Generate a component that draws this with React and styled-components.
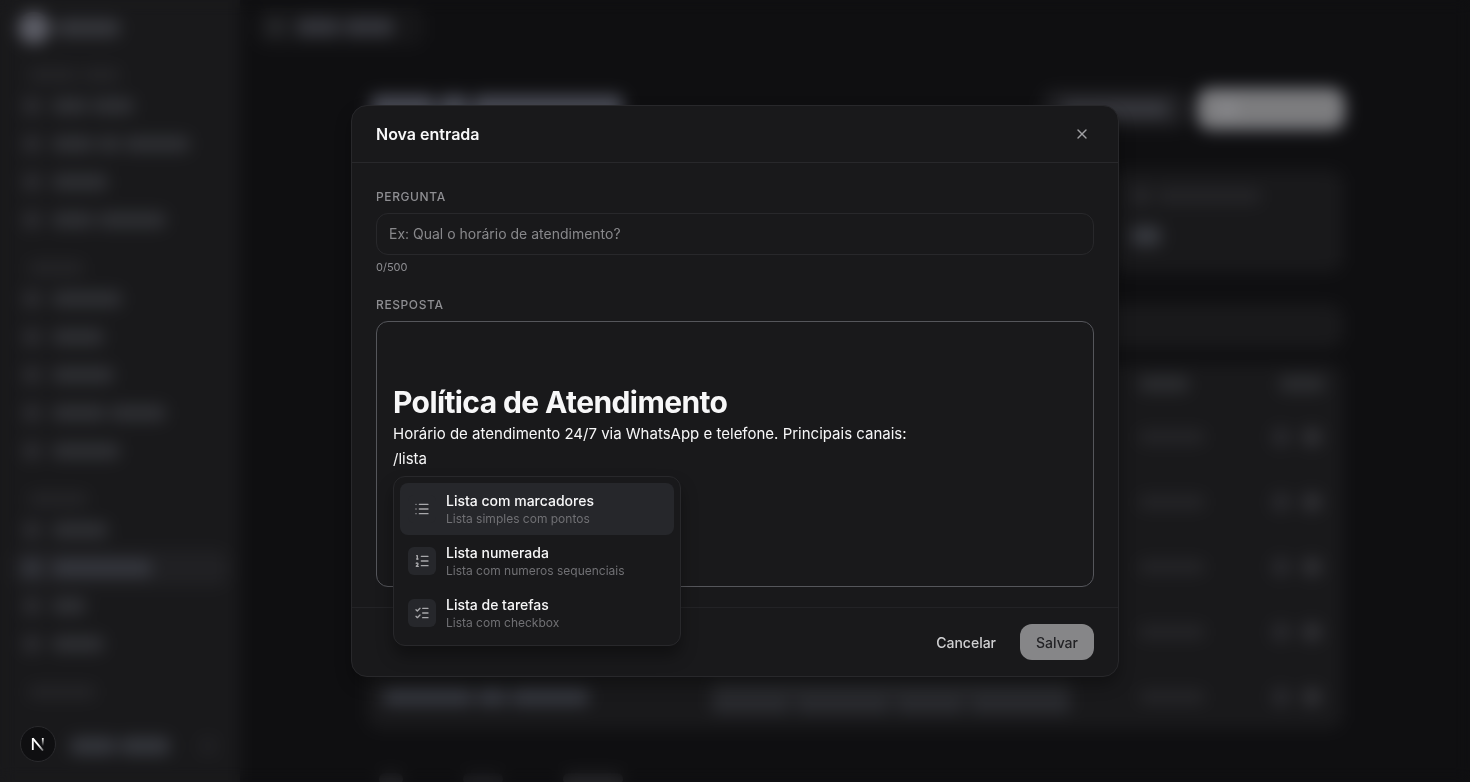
import { useState } from 'react'
import styled, { createGlobalStyle } from 'styled-components'
import { List, ListChecks, ListOrdered, X } from 'lucide-react'

const navGroups = [
  { heading: [50, 38], items: [[36, 42], [42, 22, 66], [56], [42, 68]] },
  { heading: [56], items: [[70], [52], [62], [54, 56], [68]] },
  { heading: [60], items: [[56], [100], [34], [52]], active: 1 },
  { heading: [68], items: [] },
]

const tableRows = [66, 66, 66, 66, 66]

const commands = [
  { title: 'Lista com marcadores', text: 'Lista simples com pontos', icon: List },
  { title: 'Lista numerada', text: 'Lista com numeros sequenciais', icon: ListOrdered },
  { title: 'Lista de tarefas', text: 'Lista com checkbox', icon: ListChecks },
]

function Words({ widths, tone, size }) {
  return (
    <WordRow>
      {widths.map((width, i) => (
        <Word key={i} $tone={tone} $size={size} style={{ width }} />
      ))}
    </WordRow>
  )
}

function Sidebar() {
  return (
    <Aside>
      <Brand>
        <BrandMark />
        <Words widths={[64]} tone="#35363b" size={18} />
      </Brand>
      <Nav>
        {navGroups.map((group, i) => (
          <div key={i}>
            <NavHeading><Words widths={group.heading} tone="#242427" size={14} /></NavHeading>
            <NavList>
              {group.items.map((item, j) => (
                <NavItem key={j} href="#" $active={group.active === j}>
                  <Dot $tone={group.active === j ? '#34363d' : '#2b2b2f'} />
                  <Words widths={item} tone={group.active === j ? '#36383f' : '#2f3034'} size={16} />
                </NavItem>
              ))}
            </NavList>
          </div>
        ))}
      </Nav>
      <Account>
        <Words widths={[46, 50]} tone="#34363c" size={18} />
        <Dot $tone="#202023" />
      </Account>
    </Aside>
  )
}

function KnowledgePage() {
  return (
    <Main>
      <TopBar>
        <Crumb>
          <Dot $tone="#27282b" />
          <Words widths={[44, 50]} tone="#34353b" size={18} />
        </Crumb>
      </TopBar>
      <Content>
        <PageHead>
          <Words widths={[64, 30, 150]} tone="#494b55" size={28} />
          <Actions>
            <Action><Words widths={[108]} tone="#393a40" size={16} /></Action>
            <Action $primary><Words widths={[20]} tone="#86868a" size={18} /></Action>
          </Actions>
        </PageHead>
        <Cards>
          {[1, 2, 3, 4].map(n => (
            <Card key={n}>
              <CardLabel>
                <Dot $tone="#262629" />
                <Words widths={[104]} tone="#242427" size={16} />
              </CardLabel>
              <Words widths={[30]} tone="#37393f" size={20} />
            </Card>
          ))}
        </Cards>
        <SearchBar />
        <Table>
          <thead>
            <tr>
              <Th $width={328}><Words widths={[70]} tone="#2c2d30" size={16} /></Th>
              <Th><Words widths={[60]} tone="#2c2d30" size={16} /></Th>
              <Th $width={140}><Words widths={[50]} tone="#2c2d30" size={16} /></Th>
              <Th $width={80}><Words widths={[46]} tone="#2c2d30" size={16} /></Th>
            </tr>
          </thead>
          <tbody>
            {tableRows.map((width, i) => (
              <tr key={i}>
                <Td><Words widths={[90, 30, 78]} tone="#34363d" size={18} /></Td>
                <Td>
                  <Words widths={[360]} tone="#27282b" size={14} />
                  <Words widths={[80, 96, 70, 102]} tone="#2c2d32" size={14} />
                </Td>
                <Td><Words widths={[width]} tone="#252528" size={14} /></Td>
                <Td>
                  <RowActions>
                    <Dot $tone="#29292d" />
                    <Dot $tone="#313135" />
                  </RowActions>
                </Td>
              </tr>
            ))}
          </tbody>
        </Table>
        <Pager>
          <Words widths={[24]} tone="#222225" size={12} />
          <Words widths={[40]} tone="#1d1d20" size={12} />
          <Words widths={[60]} tone="#242427" size={12} />
        </Pager>
      </Content>
    </Main>
  )
}

function CommandMenu() {
  const [selected, setSelected] = useState(0)

  return (
    <Menu role="listbox" aria-label="Comandos">
      {commands.map(({ title, text, icon: Icon }, i) => (
        <Command
          key={title}
          type="button"
          role="option"
          aria-selected={selected === i}
          $selected={selected === i}
          onMouseEnter={() => setSelected(i)}
        >
          <CommandIcon><Icon size={16} strokeWidth={2} /></CommandIcon>
          <span>
            <CommandTitle>{title}</CommandTitle>
            <CommandText>{text}</CommandText>
          </span>
        </Command>
      ))}
    </Menu>
  )
}

function EntryDialog() {
  const [question, setQuestion] = useState('')

  return (
    <Dialog role="dialog" aria-modal="true" aria-labelledby="dialog-title">
      <DialogHead>
        <DialogTitle id="dialog-title">Nova entrada</DialogTitle>
        <Close type="button" aria-label="Fechar"><X size={16} strokeWidth={2} /></Close>
      </DialogHead>
      <DialogBody>
        <div>
          <Label htmlFor="question">Pergunta</Label>
          <Input
            id="question"
            maxLength={500}
            placeholder="Ex: Qual o horário de atendimento?"
            value={question}
            onChange={e => setQuestion(e.target.value)}
          />
          <Counter>{question.length}/500</Counter>
        </div>
        <div>
          <Label as="div" id="answer-label">Resposta</Label>
          <EditorFrame>
            <Editor
              role="textbox"
              aria-multiline="true"
              aria-labelledby="answer-label"
              contentEditable
              suppressContentEditableWarning
              spellCheck={false}
            >
              <h1>Política de Atendimento</h1>
              <p>Horário de atendimento 24/7 via WhatsApp e telefone. Principais canais:</p>
              <p>/lista</p>
            </Editor>
            <MenuAnchor><CommandMenu /></MenuAnchor>
          </EditorFrame>
        </div>
      </DialogBody>
      <DialogFoot>
        <Button type="button">Cancelar</Button>
        <Button type="button" $primary>Salvar</Button>
      </DialogFoot>
    </Dialog>
  )
}

function DevBadge() {
  return (
    <Badge type="button" aria-label="Next.js">
      <svg width="14" height="14" viewBox="0 0 14 14" fill="none" strokeWidth="1.8">
        <defs>
          <linearGradient id="leg" x1="0" y1="1" x2="0" y2="9" gradientUnits="userSpaceOnUse">
            <stop stopColor="#fff" />
            <stop offset="1" stopColor="#fff" stopOpacity="0" />
          </linearGradient>
          <linearGradient id="slash" x1="8" y1="8" x2="13" y2="14" gradientUnits="userSpaceOnUse">
            <stop stopColor="#fff" />
            <stop offset="1" stopColor="#fff" stopOpacity="0.3" />
          </linearGradient>
        </defs>
        <line x1="1.8" y1="1" x2="1.8" y2="13" stroke="#fff" />
        <line x1="1.8" y1="1.4" x2="12" y2="13.6" stroke="url(#slash)" />
        <line x1="11.8" y1="1" x2="11.8" y2="9" stroke="url(#leg)" />
      </svg>
    </Badge>
  )
}

export default function App() {
  return (
    <>
      <GlobalStyle />
      <Shell inert>
        <Sidebar />
        <KnowledgePage />
      </Shell>
      <Overlay>
        <EntryDialog />
      </Overlay>
      <DevBadge />
    </>
  )
}

const GlobalStyle = createGlobalStyle`
  * {
    box-sizing: border-box;
  }

  body {
    margin: 0;
    overflow: hidden;
    background: #0f0f11;
    color: #f7f7f8;
    font-family: Inter, 'Liberation Sans', sans-serif;
    font-size: 14px;
    -webkit-font-smoothing: antialiased;
  }

  button, input {
    font: inherit;
  }
`

const Shell = styled.div`
  display: flex;
  height: 100vh;
  overflow: hidden;
`

const WordRow = styled.span`
  display: flex;
  gap: 4px;
`

const Word = styled.span`
  height: ${props => props.$size}px;
  border-radius: 6px;
  background: ${props => props.$tone};
`

const Dot = styled.span`
  flex: none;
  width: 20px;
  height: 20px;
  border-radius: 10px;
  background: ${props => props.$tone};
`

const Aside = styled.aside`
  display: flex;
  flex: none;
  flex-direction: column;
  width: 240px;
  background: #19191b;
`

const Brand = styled.div`
  display: flex;
  align-items: center;
  gap: 6px;
  height: 62px;
  padding: 0 18px 7px;
`

const BrandMark = styled.span`
  width: 32px;
  height: 32px;
  border-radius: 16px;
  background: #5c5d66;
`

const Nav = styled.nav`
  display: flex;
  flex: 1;
  flex-direction: column;
  gap: 17px;
  padding: 0 12px;
`

const NavHeading = styled.div`
  display: flex;
  align-items: center;
  height: 26px;
  padding: 0 16px;
`

const NavList = styled.div`
  display: flex;
  flex-direction: column;
  gap: 2px;
`

const NavItem = styled.a`
  display: flex;
  align-items: center;
  gap: 10px;
  height: 36px;
  padding: 0 10px;
  border-radius: 10px;
  background: ${props => props.$active ? '#202023' : 'transparent'};
`

const Account = styled.div`
  display: flex;
  align-items: center;
  justify-content: space-between;
  height: 72px;
  padding: 0 22px 0 70px;
`

const Main = styled.main`
  flex: 1;
  min-width: 0;
`

const TopBar = styled.header`
  display: flex;
  height: 90px;
  padding: 8px 16px;
`

const Crumb = styled.div`
  display: flex;
  align-items: center;
  gap: 10px;
  width: 168px;
  height: 38px;
  padding: 0 10px;
  border-radius: 10px;
  background: #161618;
`

const Content = styled.div`
  max-width: 976px;
  margin: 0 auto;
`

const PageHead = styled.div`
  display: flex;
  align-items: center;
  justify-content: space-between;
  height: 38px;
  margin-bottom: 42px;
  padding-left: 4px;
`

const Actions = styled.div`
  display: flex;
  gap: 12px;
`

const Action = styled.button`
  display: flex;
  align-items: center;
  justify-content: flex-start;
  width: 144px;
  height: 38px;
  padding: 0 18px;
  border: 0;
  border-radius: 12px;
  background: ${props => props.$primary ? '#7c7c7e' : '#1f1f22'};
  box-shadow: ${props => props.$primary ? '0 0 0 3px #54565f' : 'none'};
`

const Cards = styled.div`
  display: grid;
  grid-template-columns: repeat(4, 1fr);
  gap: 16px;
  margin-bottom: 32px;
`

const Card = styled.div`
  display: flex;
  flex-direction: column;
  gap: 20px;
  height: 102px;
  padding: 16px 20px;
  border-radius: 14px;
  background: #19191b;
`

const CardLabel = styled.div`
  display: flex;
  align-items: center;
  gap: 6px;
`

const SearchBar = styled.div`
  height: 44px;
  margin-bottom: 16px;
  border-radius: 14px;
  background: #19191b;
`

const Table = styled.table`
  width: 100%;
  table-layout: fixed;
  border-radius: 14px;
  border-spacing: 0;
  background: #19191b;
`

const Th = styled.th`
  width: ${props => props.$width ? `${props.$width}px` : 'auto'};
  height: 40px;
  padding: 0 16px;
`

const Td = styled.td`
  height: 65px;
  padding: 0 16px;

  ${WordRow} + ${WordRow} {
    margin-top: 2px;
  }
`

const RowActions = styled.div`
  display: flex;
  gap: 11px;
  margin-left: -8px;
`

const Pager = styled.div`
  display: flex;
  gap: 60px;
  padding: 44px 12px;
`

const Overlay = styled.div`
  position: fixed;
  inset: 0;
  display: flex;
  align-items: center;
  justify-content: center;
  padding: 16px;
  backdrop-filter: blur(8px);
`

const Dialog = styled.section`
  width: 100%;
  max-width: 768px;
  border: 1px solid #28282b;
  border-radius: 16px;
  background: #19191b;
  box-shadow: 0 8px 16px rgba(0, 0, 0, 0.3);
`

const DialogHead = styled.header`
  display: flex;
  align-items: center;
  justify-content: space-between;
  height: 57px;
  padding: 0 24px;
  border-bottom: 1px solid #28282b;
`

const DialogTitle = styled.h2`
  margin: 0;
  font-size: 16px;
  font-weight: 600;
`

const Close = styled.button`
  display: flex;
  padding: 4px;
  border: 0;
  background: none;
  color: #a0a0a3;
`

const DialogBody = styled.div`
  display: flex;
  flex-direction: column;
  gap: 20px;
  padding: 24px 24px 20px;
`

const Label = styled.label`
  display: block;
  margin-bottom: 6px;
  color: #8e8e92;
  font-size: 12px;
  font-weight: 500;
  letter-spacing: 0.6px;
  line-height: 20px;
  text-transform: uppercase;
`

const Input = styled.input`
  display: block;
  width: 100%;
  height: 42px;
  padding: 0 12px 2px;
  border: 1px solid #28282b;
  border-radius: 12px;
  outline: none;
  background: transparent;
  color: #f7f7f8;

  &::placeholder {
    color: #88888b;
    opacity: 1;
  }
`

const Counter = styled.div`
  margin-top: 4px;
  color: #8e8e92;
  font-size: 11px;
  line-height: 16px;
`

const EditorFrame = styled.div`
  min-height: 266px;
  padding: 16px;
  border: 1px solid #55565b;
  border-radius: 12px;
`

const Editor = styled.div`
  outline: none;
  font-size: 15px;
  line-height: 25px;

  h1 {
    margin: 46px 0 0;
    padding-bottom: 1px;
    font-size: 30px;
    font-weight: 700;
    letter-spacing: -0.6px;
    line-height: 36px;
  }

  p {
    margin: 0;
  }
`

const MenuAnchor = styled.div`
  position: relative;
`

const Menu = styled.div`
  position: absolute;
  top: 5px;
  left: 0;
  width: 288px;
  padding: 6px;
  border: 1px solid #28282b;
  border-radius: 12px;
  background: #19191b;
  box-shadow: 0 10px 16px rgba(0, 0, 0, 0.35);
`

const Command = styled.button`
  display: flex;
  align-items: center;
  gap: 10px;
  width: 100%;
  height: 52px;
  padding: 0 8px;
  border: 0;
  border-radius: 8px;
  background: ${props => props.$selected ? '#26272b' : 'transparent'};
  color: #f7f7f8;
  text-align: left;
`

const CommandIcon = styled.span`
  display: flex;
  align-items: center;
  justify-content: center;
  width: 28px;
  height: 28px;
  border-radius: 6px;
  background: #26272b;
  color: #a8a8ab;
`

const CommandTitle = styled.span`
  display: block;
  font-weight: 500;
  line-height: 20px;
`

const CommandText = styled.span`
  display: block;
  color: #707074;
  font-size: 12px;
  line-height: 16px;
`

const DialogFoot = styled.footer`
  display: flex;
  justify-content: flex-end;
  gap: 8px;
  padding: 16px 24px;
  border-top: 1px solid #232326;
`

const Button = styled.button`
  height: 36px;
  padding: 0 16px;
  border: 0;
  border-radius: 12px;
  background: ${props => props.$primary ? '#868688' : 'transparent'};
  color: ${props => props.$primary ? '#222225' : '#d0d0d2'};
  font-weight: 500;
`

const Badge = styled.button`
  position: fixed;
  bottom: 20px;
  left: 20px;
  display: flex;
  align-items: center;
  justify-content: center;
  width: 36px;
  height: 36px;
  padding: 0;
  border: 1px solid #2a2a2d;
  border-radius: 18px;
  background: #0f0f11;
`
